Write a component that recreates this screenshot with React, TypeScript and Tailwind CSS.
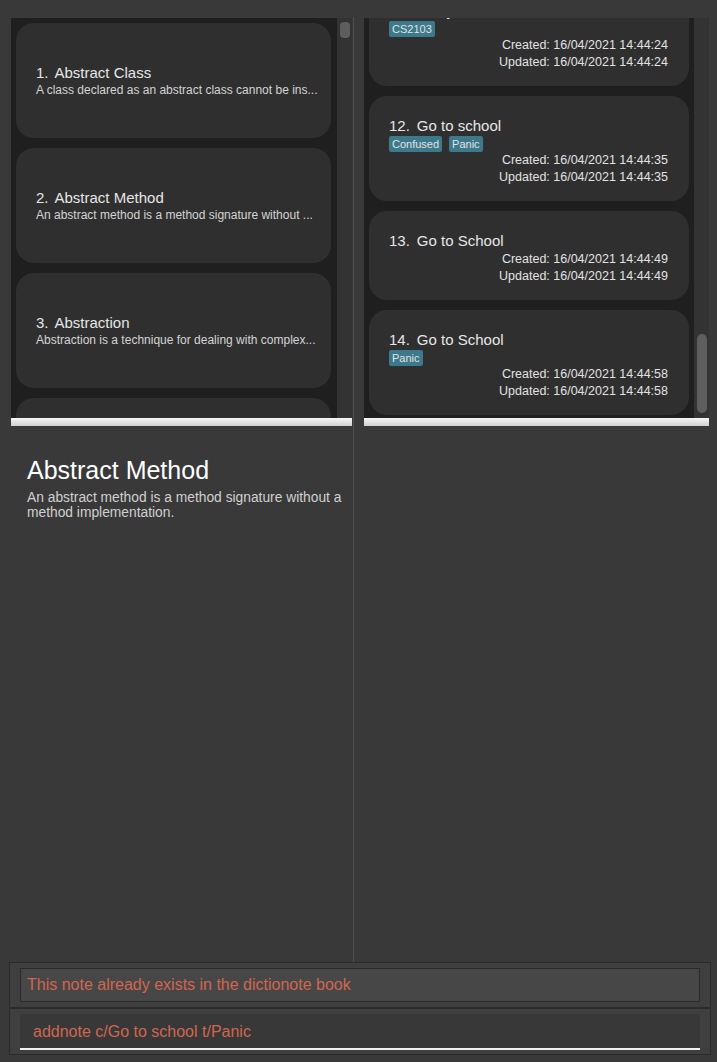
import React from 'react';

type Concept = { id: number; title: string; desc: string };
type Note = { id: number; title: string; tags: string[]; time: string };

const concepts: Concept[] = [
  { id: 1, title: 'Abstract Class', desc: 'A class declared as an abstract class cannot be ins...' },
  { id: 2, title: 'Abstract Method', desc: 'An abstract method is a method signature without ...' },
  { id: 3, title: 'Abstraction', desc: 'Abstraction is a technique for dealing with complex...' },
];

const notes: Note[] = [
  { id: 11, title: 'Study', tags: ['CS2103'], time: '14:44:24' },
  { id: 12, title: 'Go to school', tags: ['Confused', 'Panic'], time: '14:44:35' },
  { id: 13, title: 'Go to School', tags: [], time: '14:44:49' },
  { id: 14, title: 'Go to School', tags: ['Panic'], time: '14:44:58' },
];

function ConceptCard({ item }: { item: Concept }) {
  return (
    <div className="h-[115px] shrink-0 rounded-[18px] bg-[#2f2f2f] pl-[20px] pr-[10px] flex flex-col justify-center">
      <div className="flex gap-[6px] text-[15px] leading-[20px] text-[#e6e6e6]">
        <span>{item.id}.</span>
        <span>{item.title}</span>
      </div>
      <div className="text-[12px] leading-[15px] text-[#d4d4d4] whitespace-nowrap">
        {item.desc}
      </div>
    </div>
  );
}

function NoteCard({ note }: { note: Note }) {
  return (
    <div className="shrink-0 rounded-[18px] bg-[#2f2f2f] pt-[20px] pb-[15px] pl-[20px] pr-[21px] flex flex-col">
      <div className="flex gap-[7px] text-[15px] leading-[20px] text-[#e6e6e6]">
        <span>{note.id}.</span>
        <span>{note.title}</span>
      </div>
      {note.tags.length > 0 && (
        <div className="flex gap-[7px] h-[16px]">
          {note.tags.map((t) => (
            <span
              key={t}
              className="h-[16px] px-[3px] rounded-[2px] bg-[#3c798b] text-[11px] leading-[16px] text-[#e2e2e2]"
            >
              {t}
            </span>
          ))}
        </div>
      )}
      <div className="text-[12.5px] leading-[17px] text-[#e2e2e2] text-right">
        <div>Created: 16/04/2021 {note.time}</div>
        <div>Updated: 16/04/2021 {note.time}</div>
      </div>
    </div>
  );
}

export default function App() {
  return (
    <div className="w-[717px] h-[1062px] bg-[#393939] flex flex-col overflow-hidden font-['Liberation_Sans',Arial,sans-serif]">
      {/* Top split */}
      <div className="h-[962px] flex shrink-0">
        {/* Left column */}
        <div className="w-[353px] pt-[18px] pl-[11px] pr-[1px] flex flex-col">
          <div className="h-[400px] flex">
            <div className="flex-1 bg-[#1f1f1f] overflow-hidden">
              <div className="flex flex-col gap-[10px] pt-[5px] pl-[5px] pr-[6px]">
                {concepts.map((c) => (
                  <ConceptCard key={c.id} item={c} />
                ))}
                {/* next card, scrolled out of view */}
                <div className="h-[115px] shrink-0 rounded-[18px] bg-[#2f2f2f]" />
              </div>
            </div>
            <div className="w-[15px] bg-[#333333] pt-[4px] pl-[3px]">
              <div className="w-[10px] h-[16px] rounded-[4px] bg-[#5e5e5e]" />
            </div>
          </div>
          <div className="h-[8px] bg-gradient-to-b from-[#f6f6f6] to-[#cfcfcf]" />

          {/* Detail */}
          <div className="pt-[30px] pl-[16px]">
            <div className="text-[25px] leading-[29px] text-white">Abstract Method</div>
            <div className="mt-[5px] text-[13.8px] leading-[15px] text-[#d0d0d0]">
              An abstract method is a method signature without a method implementation.
            </div>
          </div>
        </div>

        {/* Divider */}
        <div className="w-px mt-[17px] bg-[#4d4d4d]" />

        {/* Right column */}
        <div className="flex-1 pt-[18px] pl-[10px] pr-[8px] flex flex-col">
          <div className="h-[400px] flex">
            <div className="flex-1 bg-[#1f1f1f] overflow-hidden">
              <div className="flex flex-col gap-[10px] -mt-[37px] px-[5px]">
                {notes.map((n) => (
                  <NoteCard key={n.id} note={n} />
                ))}
              </div>
            </div>
            <div className="w-[15px] bg-[#333333] flex flex-col justify-end pb-[5px] pl-[3px]">
              <div className="w-[10px] h-[79px] rounded-[5px] bg-[#5e5e5e]" />
            </div>
          </div>
          <div className="h-[8px] bg-gradient-to-b from-[#f6f6f6] to-[#cfcfcf]" />
        </div>
      </div>

      {/* Result display */}
      <div className="ml-[9px] w-[702px] h-[46px] border border-[#2b2b2b] bg-[#3f3f3f] pt-[5px] px-[10px]">
        <div className="h-[34px] border border-[#2a2a2a] bg-[#474747] pl-[6px] flex items-center text-[16px] text-[#d16650]">
          This note already exists in the dictionote book
        </div>
      </div>

      {/* Command box */}
      <div className="ml-[9px] w-[702px] h-[47px] border border-[#2b2b2b] bg-[#3f3f3f] pt-[5px] px-[10px]">
        <div className="h-[36px] bg-[#383838] border-b-2 border-[#f2f2f2] pl-[13px] pt-[2px] flex items-center text-[16px] text-[#d16650]">
          addnote c/Go to school t/Panic
        </div>
      </div>
    </div>
  );
}
